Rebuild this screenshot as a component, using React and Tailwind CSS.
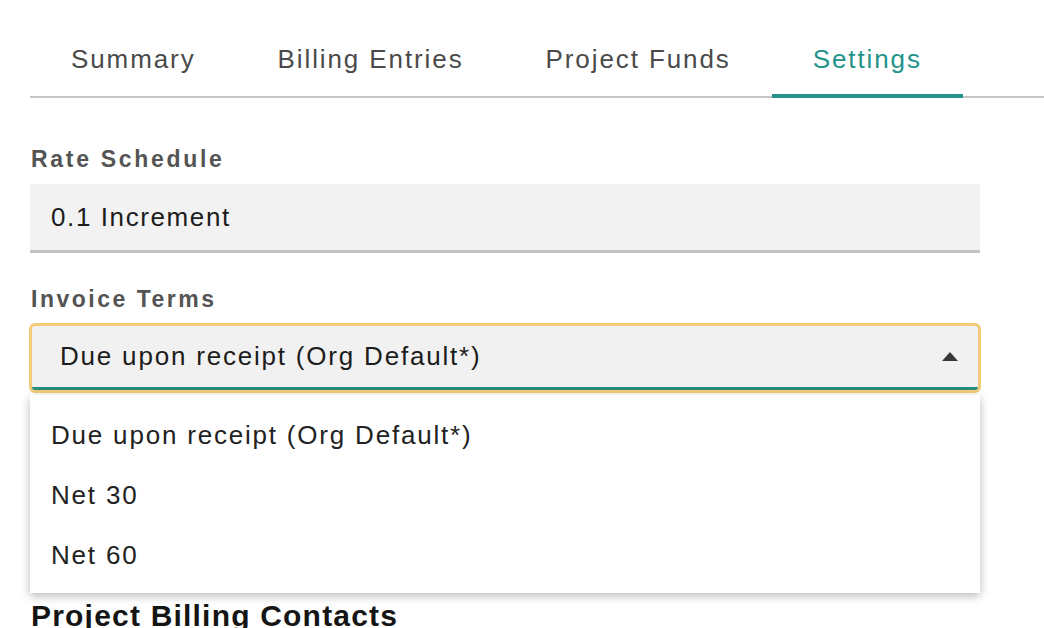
import React from "react";

const tabs = ["Summary", "Billing Entries", "Project Funds", "Settings"];
const options = ["Due upon receipt (Org Default*)", "Net 30", "Net 60"];

export default function App() {
  return (
    <div className="w-[1044px] h-[628px] overflow-hidden bg-white font-['Liberation_Sans',Arial,sans-serif]">
      <div className="ml-[30px] w-[1014px]">
        {/* Tabs */}
        <div className="mt-[24px] flex border-b-2 border-[#c6c6c6]">
          {tabs.map((t) => {
            const active = t === "Settings";
            return (
              <div
                key={t}
                className={
                  active
                    ? "h-[74px] -mb-[2px] px-[41px] flex items-center border-b-4 border-[#24948a] text-[#24948a] text-[26px] tracking-[1.9px]"
                    : "h-[74px] -mb-[2px] px-[41px] flex items-center border-b-4 border-transparent text-[#4a4a4a] text-[26px] tracking-[1.9px]"
                }
              >
                {t}
              </div>
            );
          })}
        </div>

        <div className="w-[950px]">
          {/* Rate schedule */}
          <div className="mt-[48px] leading-[26px] text-[23px] font-bold text-[#545454] tracking-[2.7px] pl-px">
            Rate Schedule
          </div>
          <div className="mt-[12px] h-[69px] bg-[#f2f2f2] border-b-[3px] border-[#c2c2c2] flex items-center pl-[21px] text-[26px] tracking-[1.6px] text-[#1c1c1c]">
            0.1 Increment
          </div>

          {/* Invoice terms */}
          <div className="mt-[33px] leading-[26px] text-[23px] font-bold text-[#545454] tracking-[2.5px] pl-px">
            Invoice Terms
          </div>
          <div className="relative mt-[11px]">
            <div className="h-[70px] -mx-px rounded-[6px] border-[3px] border-[#f1cb77] bg-[#f1f1f1] overflow-hidden flex flex-col">
              <div className="flex-1 flex items-center justify-between pl-[28px] pr-[20px] text-[26px] tracking-[1.8px] text-[#1c1c1c]">
                <span>Due upon receipt (Org Default*)</span>
                <svg width="16" height="9" viewBox="0 0 16 9" className="mt-[-1px]">
                  <path d="M0 9 L8 0 L16 9 Z" fill="#383838" />
                </svg>
              </div>
              <div className="h-[3px] bg-[#2a8c7c]" />
            </div>

            {/* Dropdown menu */}
            <div className="absolute left-0 right-0 top-[72px] z-10 bg-white pt-[10px] pb-[8px] shadow-[0_3px_9px_rgba(0,0,0,0.28)]">
              {options.map((o) => (
                <div
                  key={o}
                  className="h-[60px] flex items-center pl-[21px] text-[26px] tracking-[1.8px] text-[#222222]"
                >
                  {o}
                </div>
              ))}
            </div>
          </div>

          <div className="mt-[205px] leading-[36px] text-[30px] font-bold text-[#151515] tracking-[1.2px] pl-px">
            Project Billing Contacts
          </div>
        </div>
      </div>
    </div>
  );
}
